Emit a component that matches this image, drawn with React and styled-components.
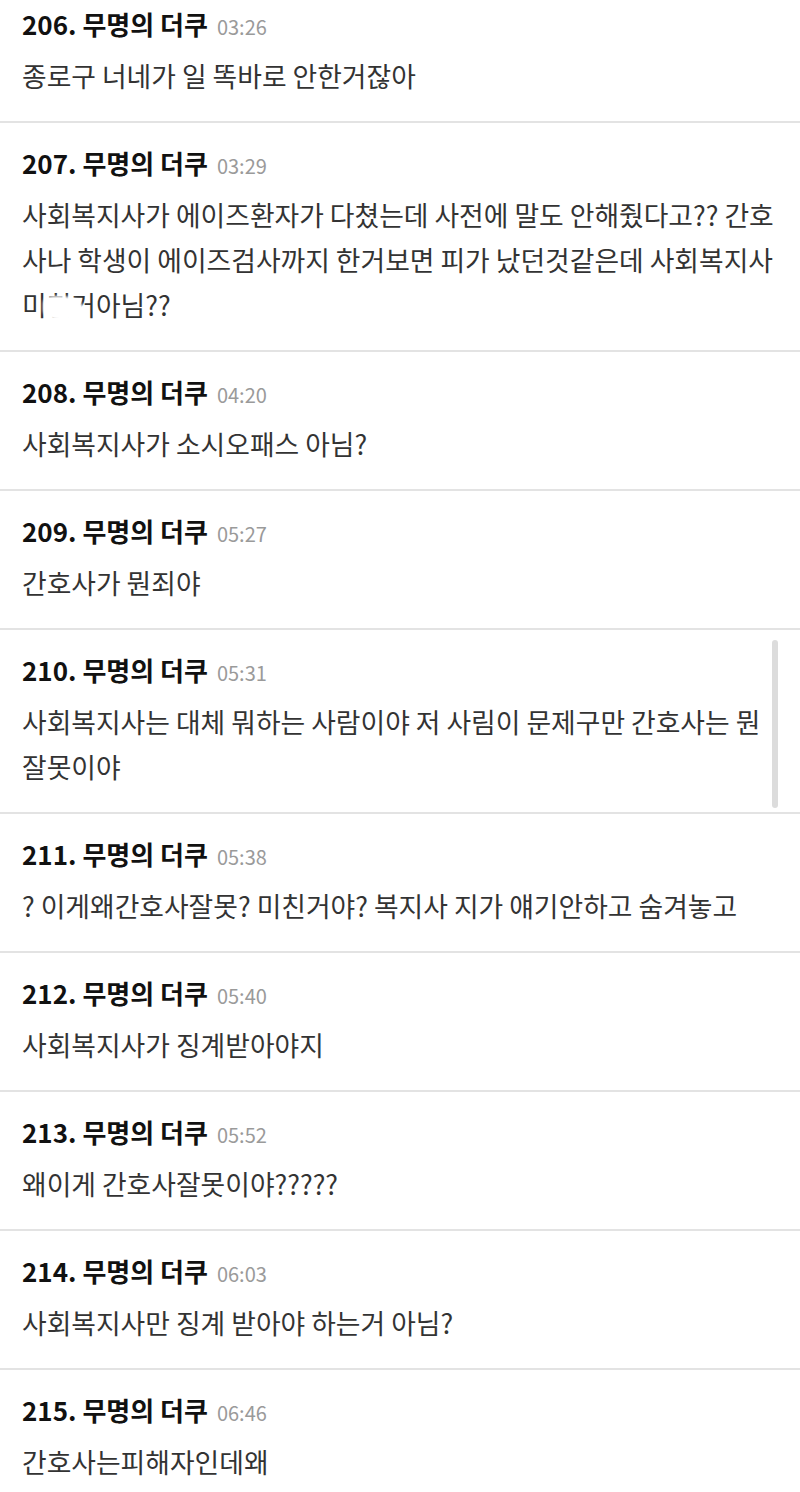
import styled, { createGlobalStyle } from "styled-components";

const GlobalStyle = createGlobalStyle`
  html, body {
    margin: 0;
    padding: 0;
    background: #fff;
  }
  body {
    font-family: "Noto Sans CJK KR", "Noto Sans", sans-serif;
  }
`;

const comments = [
  { no: 206, time: "03:26", text: "종로구 너네가 일 똑바로 안한거잖아" },
  {
    no: 207,
    time: "03:29",
    text: "사회복지사가 에이즈환자가 다쳤는데 사전에 말도 안해줬다고?? 간호사나 학생이 에이즈검사까지 한거보면 피가 났던것같은데 사회복지사 ",
    smudged: true,
  },
  { no: 208, time: "04:20", text: "사회복지사가 소시오패스 아님?" },
  { no: 209, time: "05:27", text: "간호사가 뭔죄야" },
  { no: 210, time: "05:31", text: "사회복지사는 대체 뭐하는 사람이야 저 사림이 문제구만 간호사는 뭔 잘못이야" },
  { no: 211, time: "05:38", text: "? 이게왜간호사잘못? 미친거야? 복지사 지가 얘기안하고 숨겨놓고" },
  { no: 212, time: "05:40", text: "사회복지사가 징계받아야지" },
  { no: 213, time: "05:52", text: "왜이게 간호사잘못이야?????" },
  { no: 214, time: "06:03", text: "사회복지사만 징계 받아야 하는거 아님?" },
  { no: 215, time: "06:46", text: "간호사는피해자인데왜" },
];

function App() {
  return (
    <Page>
      <GlobalStyle />
      <List>
        {comments.map((c) => (
          <Item key={c.no}>
            <Header>
              <Author>{c.no}. 무명의 더쿠</Author>
              <Time>{c.time}</Time>
            </Header>
            <Body>
              {c.text}
              {c.smudged && (
                <>
                  <Smudge>
                    미친
                    <Patch />
                  </Smudge>
                  거아님??
                </>
              )}
            </Body>
          </Item>
        ))}
      </List>
      <ScrollThumb />
    </Page>
  );
}

export default App;

const Page = styled.div`
  position: relative;
  width: 800px;
  height: 1492px;
  overflow: hidden;
  background: #fff;
`;

const List = styled.ul`
  list-style: none;
  margin: -16px 0 0;
  padding: 0;
`;

const Item = styled.li`
  padding: 22px 22px 23px;
  border-bottom: 2px solid #e3e3e3;
`;

const Header = styled.div`
  display: flex;
  align-items: baseline;
  height: 36px;
  line-height: 36px;
  margin-bottom: 11px;
`;

const Author = styled.span`
  font-size: 26px;
  font-weight: 700;
  color: #111;
`;

const Time = styled.span`
  margin-left: 9px;
  font-size: 20px;
  color: #9a9a9a;
`;

const Body = styled.p`
  margin: 0;
  font-size: 26.8px;
  line-height: 45px;
  color: #333;
`;

const Smudge = styled.span`
  position: relative;
`;

const Patch = styled.span`
  position: absolute;
  left: 23px;
  top: 13px;
  width: 37px;
  height: 20px;
  background: #fff;
  border-radius: 30% 70% 50% 50%;
  box-shadow: 0 0 3px 2px #fff;
`;

const ScrollThumb = styled.div`
  position: absolute;
  top: 640px;
  right: 22px;
  width: 6px;
  height: 168px;
  border-radius: 3px;
  background: #dcdcdc;
`;
